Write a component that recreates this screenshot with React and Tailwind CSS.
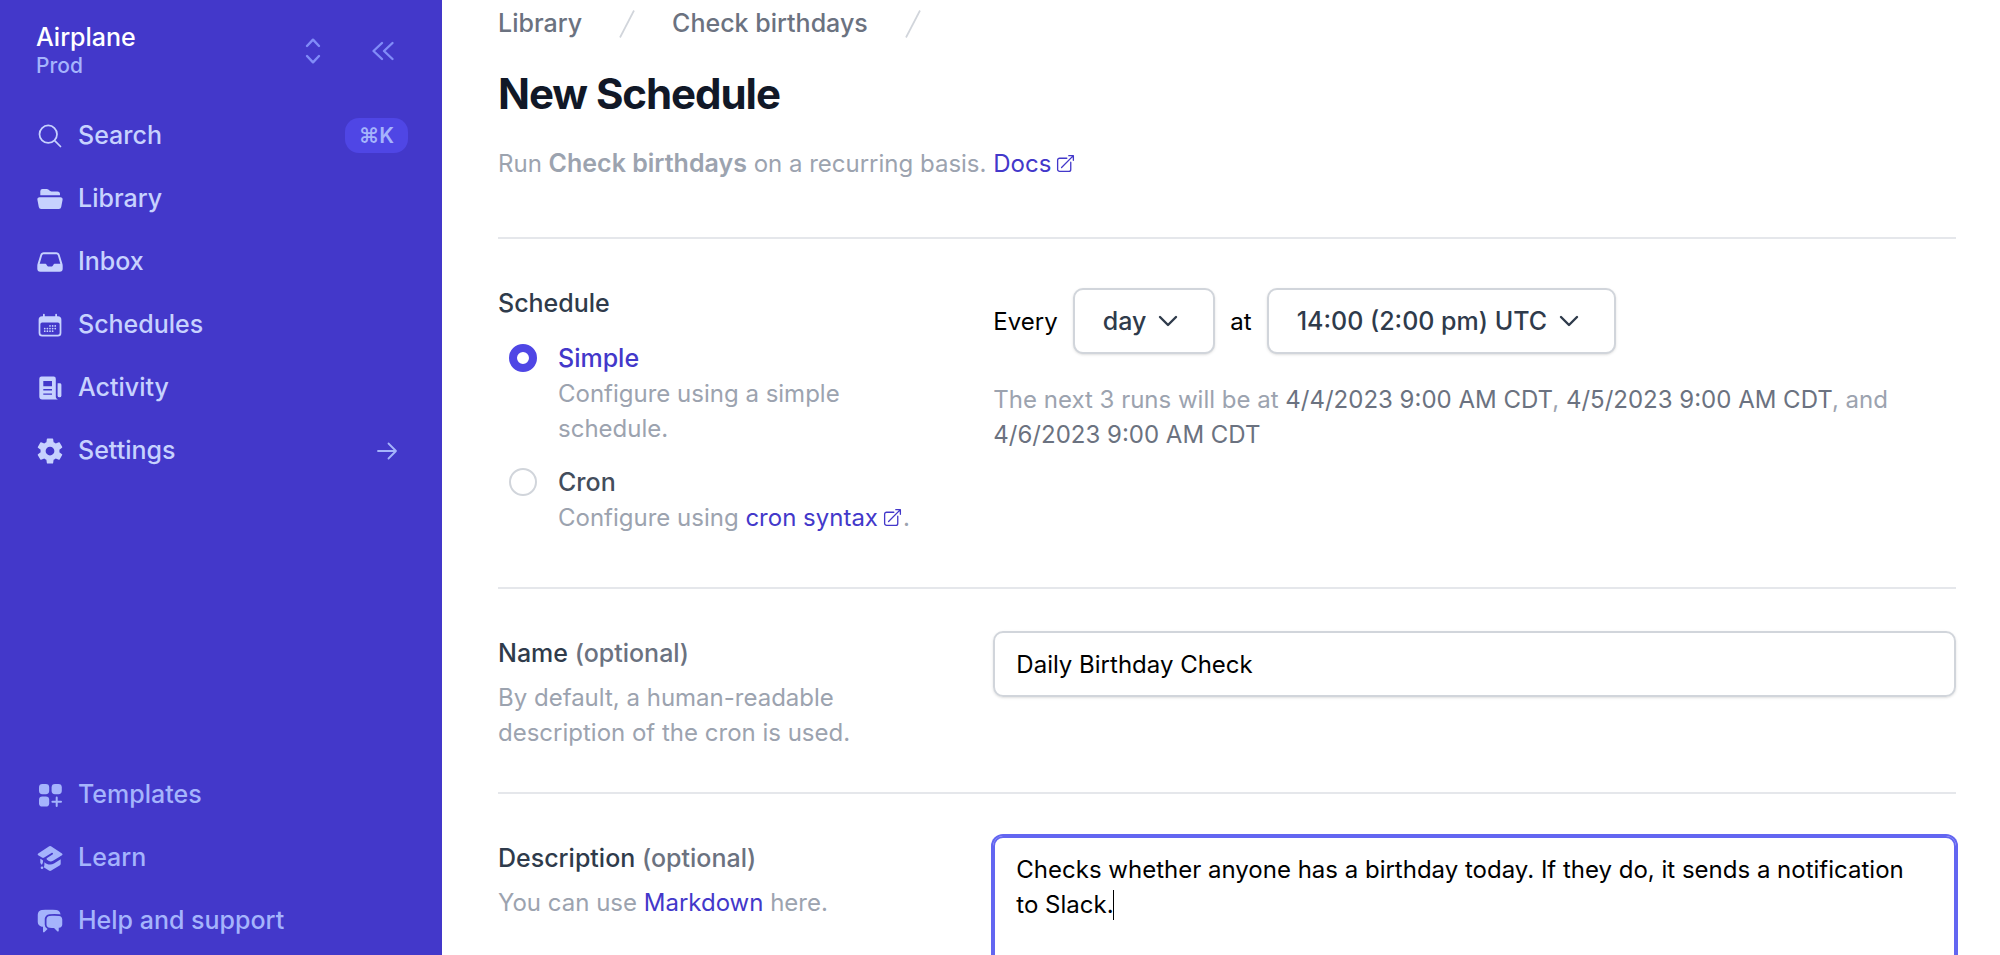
import { useState } from "react";
import {
  HiCalendarDays,
  HiChatBubbleLeftRight,
  HiOutlineArrowTopRightOnSquare,
  HiOutlineMagnifyingGlass,
} from "react-icons/hi2";
import { IoSettingsSharp } from "react-icons/io5";

function LibraryIcon(props) {
  return (
    <svg viewBox="0 0 28 28" fill="currentColor" {...props}>
      <path d="M4.300 10.300V6.200A2.200 2.200 0 0 1 6.500 4h4.300c.6 0 1.100.2 1.500.5l1.800 1.400c.4.3.9.500 1.400.5h6A2.500 2.500 0 0 1 24 8.900v1.400Z" />
      <path d="M3.600 12.200h20.800c1.500 0 2.500 1.200 2.200 2.600l-1.400 7.300A2.400 2.400 0 0 1 22.900 24H5.100a2.400 2.400 0 0 1-2.300-1.900l-1.400-7.300c-.3-1.400.7-2.600 2.200-2.600Z" />
    </svg>
  );
}

function InboxIcon(props) {
  return (
    <svg viewBox="0 0 28 28" fill="currentColor" {...props}>
      <path
        fillRule="evenodd"
        d="M7.800 4.200h12.400c1.700 0 3 1 3.500 2.700l2.600 8.600c.2.700.4 1.400.4 2.200v3.100a3 3 0 0 1-3 3H4.300a3 3 0 0 1-3-3v-3.100c0-.8.2-1.500.4-2.200l2.600-8.600c.5-1.700 1.800-2.700 3.500-2.700Zm.2 2c-.9 0-1.600.5-1.900 1.400L3.700 15.700h5.200c.9 0 1.500.5 1.800 1.300.3.900 1 1.500 2 1.500h2.600c1 0 1.700-.6 2-1.500.3-.8.9-1.300 1.800-1.300h5.200l-2.400-8.100c-.3-.9-1-1.400-1.900-1.400Z"
      />
    </svg>
  );
}

function ActivityIcon(props) {
  return (
    <svg viewBox="0 0 28 28" fill="currentColor" {...props}>
      <path
        fillRule="evenodd"
        d="M5.500 2.500h12A2.200 2.200 0 0 1 19.800 4.700V22.500c0 1.700 1 2.700 2.700 3H6.200a2.900 2.900 0 0 1-2.900-2.900V4.700A2.200 2.200 0 0 1 5.500 2.500ZM7.300 7v5.200h8.700V7ZM7.300 15v1.400h8.700V15ZM7.300 19.400v1.400h8.700v-1.400Z"
      />
      <path d="M21.600 9.200h2.200c.900 0 1.600.700 1.600 1.600v10.600a1.900 1.900 0 0 1-3.800 0Z" />
    </svg>
  );
}

function TemplatesIcon(props) {
  return (
    <svg viewBox="0 0 28 28" fill="currentColor" {...props}>
      <rect x="3" y="3" width="10.2" height="10.2" rx="3.4" />
      <rect x="15.6" y="3" width="10.2" height="10.2" rx="3.4" />
      <rect x="3" y="15.4" width="10.2" height="10.2" rx="3.4" />
      <path d="M20.700 16.500v8.600M16.400 20.800H25" fill="none" stroke="currentColor" strokeWidth="2" strokeLinecap="round" />
    </svg>
  );
}

function LearnIcon(props) {
  return (
    <svg viewBox="0 0 28 28" fill="currentColor" {...props}>
      <path d="M13.200 2.300a1.800 1.800 0 0 1 1.800 0L26 9.500c.7.500.7 1.200 0 1.700l-9 5.600c-1.700 1-3 .9-4.600-.1l-1.300-.9c-.8-.6-.8-1.200 0-1.700l5.400-3.500c1.200-.8.300-2.400-1-1.700l-7.300 4.600c-.8.500-1.500.5-2.300 0l-3.700-2.200c-.7-.5-.7-1.200 0-1.700Z" />
      <path d="M8.300 18.200c2.600 2.400 6.600 3.300 9.700 1.300l6.700-4.200v4.200c0 .900-.3 1.500-1.100 2l-8.300 5.100c-.9.500-1.600.5-2.400 0l-5.200-3.300c.8-1.600.8-3.300.6-5.100Z" />
      <path d="M4.300 14.800l2.600 1.500c.4 1.600-.1 3.100-1.100 4.500-.9-.7-1.500-1.500-1.500-2.500Z" />
      <circle cx="6" cy="23.8" r="1.3" />
    </svg>
  );
}

const NAV = [
  { label: "Search", icon: HiOutlineMagnifyingGlass, shortcut: "⌘K" },
  { label: "Library", icon: LibraryIcon },
  { label: "Inbox", icon: InboxIcon },
  { label: "Schedules", icon: HiCalendarDays },
  { label: "Activity", icon: ActivityIcon },
  { label: "Settings", icon: IoSettingsSharp, arrow: true },
];

const FOOTER_NAV = [
  { label: "Templates", icon: TemplatesIcon },
  { label: "Learn", icon: LearnIcon },
  { label: "Help and support", icon: HiChatBubbleLeftRight },
];

function ArrowIcon() {
  return (
    <svg
      className="mr-[9px] h-6 w-6 text-[#a5b4fc]"
      viewBox="0 0 24 24"
      fill="none"
      stroke="currentColor"
      strokeWidth="1.8"
      strokeLinecap="round"
      strokeLinejoin="round"
      aria-hidden="true"
    >
      <path d="M3 12h18M13.500 4.500 21 12l-7.500 7.500" />
    </svg>
  );
}

function NavItem({ item }) {
  const Icon = item.icon;
  return (
    <a href="#" className="flex h-[63px] items-center pr-[34px] pl-[36px] hover:bg-[#4f46e5]/40">
      <Icon className="mr-[14px] h-7 w-7" aria-hidden="true" />
      <span className="flex-1">{item.label}</span>
      {item.shortcut && (
        <kbd className="flex h-[35px] items-center rounded-[14px] bg-[#4f46e5] px-[14px] font-['Inter',sans-serif] text-[21px] font-semibold text-[#a5b4fc]">
          {item.shortcut}
        </kbd>
      )}
      {item.arrow && <ArrowIcon />}
    </a>
  );
}

function Sidebar() {
  return (
    <aside className="flex w-[442px] shrink-0 flex-col bg-[#4338ca] pt-[20px] pb-[3px] font-medium text-[#c7d2fe]">
      {/* Workspace */}
      <div className="flex items-center pr-[47px] pb-[22px] pl-[36px]">
        <div className="flex-1 pb-[6px]">
          <div className="text-[25px] leading-[35px] text-white">Airplane</div>
          <div className="text-[21px] leading-[21px] text-[#a5b4fc]">Prod</div>
        </div>
        <button type="button" aria-label="Switch workspace" className="mr-[49px] text-[#818cf8]">
          <svg
            className="h-7 w-[18px]"
            viewBox="0 0 18 28"
            fill="none"
            stroke="currentColor"
            strokeWidth="2.4"
            strokeLinecap="round"
            strokeLinejoin="round"
          >
            <path d="M3 9l6-6.300L15 9M3 19l6 6.300L15 19" />
          </svg>
        </button>
        <button type="button" aria-label="Collapse sidebar" className="text-[#818cf8]">
          <svg
            className="h-6 w-6"
            viewBox="0 0 24 24"
            fill="none"
            stroke="currentColor"
            strokeWidth="2.4"
            strokeLinecap="round"
            strokeLinejoin="round"
          >
            <path d="M11 4l-8.500 8 8.500 8M21.500 4 13 12l8.500 8" />
          </svg>
        </button>
      </div>

      <nav aria-label="Main" className="text-[25px]">
        {NAV.map((item) => (
          <NavItem key={item.label} item={item} />
        ))}
      </nav>

      <nav aria-label="Resources" className="mt-auto text-[25px] text-[#a5b4fc]">
        {FOOTER_NAV.map((item) => (
          <NavItem key={item.label} item={item} />
        ))}
      </nav>
    </aside>
  );
}

function Slash() {
  return (
    <svg className="h-7 w-4 text-[#d1d5db]" viewBox="0 0 16 28" stroke="currentColor" strokeWidth="1.7" aria-hidden="true">
      <path d="M1 27.500 15 .5" />
    </svg>
  );
}

function ExternalLink({ children }) {
  return (
    <a href="#" className="text-[#4338ca] hover:underline">
      {children}
      <HiOutlineArrowTopRightOnSquare className="ml-1 inline h-[21px] w-[21px] align-[-2px]" aria-hidden="true" />
    </a>
  );
}

function Select({ label, options }) {
  return (
    <div className="relative">
      <select
        aria-label={label}
        className="h-[66px] appearance-none rounded-[10px] border-2 border-[#d1d5db] bg-white pr-[67px] pl-[28px] text-[25px] font-medium text-[#2f3b4b] shadow-sm [field-sizing:content]"
      >
        {options.map((o) => (
          <option key={o}>{o}</option>
        ))}
      </select>
      <svg
        className="pointer-events-none absolute top-[22px] right-[36px] h-[22px] w-[22px] text-[#2f3b4b]"
        viewBox="0 0 22 22"
        fill="none"
        stroke="currentColor"
        strokeWidth="2.4"
        strokeLinecap="round"
        strokeLinejoin="round"
        aria-hidden="true"
      >
        <path d="M3 7l8 8 8-8" />
      </svg>
    </div>
  );
}

function RadioOption({ value, label, checked, onChange, children }) {
  return (
    <div className="flex px-[11px]">
      <input
        id={`mode-${value}`}
        type="radio"
        name="mode"
        value={value}
        checked={checked}
        onChange={() => onChange(value)}
        className="mt-[3px] mr-[21px] h-7 w-7 shrink-0 appearance-none rounded-full border-2 border-[#d1d5db] bg-white checked:border-8 checked:border-[#4f46e5]"
      />
      <div>
        <label
          htmlFor={`mode-${value}`}
          className={`block text-[25px] font-medium ${checked ? "text-[#4338ca]" : "text-[#434d5c]"}`}
        >
          {label}
        </label>
        <p className="text-[#9ca3af]">{children}</p>
      </div>
    </div>
  );
}

function Section({ left, children }) {
  return (
    <section className="grid grid-cols-3 gap-7 border-t-2 border-[#e5e7eb] py-[42px]">
      <div className="pt-[5px]">{left}</div>
      <div className="col-span-2">{children}</div>
    </section>
  );
}

function FieldLabel({ htmlFor, children }) {
  return (
    <label htmlFor={htmlFor} className="mb-[9px] block text-[25px] font-medium text-[#2f3b4b]">
      {children} <span className="text-[#6b7280]">(optional)</span>
    </label>
  );
}

export default function App() {
  const [mode, setMode] = useState("simple");

  return (
    <div className="flex h-screen overflow-hidden bg-white font-['Inter',sans-serif] text-[24px] leading-[35px] text-black">
      <Sidebar />

      <main className="flex-1 overflow-hidden pt-[6px] pr-[44px] pl-[56px]">
        {/* Breadcrumbs */}
        <nav aria-label="Breadcrumb" className="flex items-center gap-[37px] text-[25px] font-medium text-[#6b7280]">
          <a href="#">Library</a>
          <Slash />
          <a href="#">Check birthdays</a>
          <Slash />
        </nav>

        {/* Header */}
        <h1 className="mt-[25px] text-[42px] leading-[56px] font-bold tracking-tight text-[#111827]">New Schedule</h1>
        <p className="mt-6 mb-[56px] text-[#9ca3af]">
          Run <strong className="text-[25px] font-semibold">Check birthdays</strong> on a recurring basis.{" "}
          <ExternalLink>Docs</ExternalLink>
        </p>

        {/* Schedule */}
        <Section
          left={
            <fieldset className="pr-7 pb-[10px]">
              <legend className="mb-5 text-[25px] font-medium text-[#2f3b4b]">Schedule</legend>
              <div className="space-y-[19px]">
                <RadioOption value="simple" label="Simple" checked={mode === "simple"} onChange={setMode}>
                  Configure using a simple schedule.
                </RadioOption>
                <RadioOption value="cron" label="Cron" checked={mode === "cron"} onChange={setMode}>
                  Configure using <ExternalLink>cron syntax</ExternalLink>.
                </RadioOption>
              </div>
            </fieldset>
          }
        >
          <div className="flex items-center gap-[15px] pt-[7px]">
            <span>Every</span>
            <Select label="Interval" options={["day"]} />
            <span>at</span>
            <Select label="Time" options={["14:00 (2:00 pm) UTC"]} />
          </div>
          <p className="mt-7 text-[#9ca3af]">
            The next 3 runs will be at <span className="text-[#6b7280]">4/4/2023 9:00 AM CDT</span>,{" "}
            <span className="text-[#6b7280]">4/5/2023 9:00 AM CDT</span>, and{" "}
            <span className="whitespace-nowrap text-[#6b7280]">4/6/2023 9:00 AM CDT</span>
          </p>
        </Section>

        {/* Name */}
        <Section
          left={
            <>
              <FieldLabel htmlFor="name">Name</FieldLabel>
              <p className="text-[#9ca3af]">By default, a human-readable description of the cron is used.</p>
            </>
          }
        >
          <input
            id="name"
            type="text"
            defaultValue="Daily Birthday Check"
            className="block h-[66px] w-full rounded-[10px] border-2 border-[#d1d5db] px-[21px] shadow-sm outline-none"
          />
        </Section>

        {/* Description */}
        <Section
          left={
            <>
              <FieldLabel htmlFor="description">Description</FieldLabel>
              <p className="text-[#9ca3af]">
                You can use{" "}
                <a href="#" className="text-[#4338ca] hover:underline">
                  Markdown
                </a>{" "}
                here.
              </p>
            </>
          }
        >
          <div className="relative">
            <textarea
              id="description"
              rows={4}
              defaultValue="Checks whether anyone has a birthday today. If they do, it sends a notification to Slack."
              className="block w-full resize-none rounded-[10px] border-2 border-[#6366f1] py-[14px] pr-7 pl-[21px] caret-transparent ring-2 ring-[#6366f1] outline-none"
            />
            {/* Text cursor */}
            <span className="absolute top-[54px] left-[120px] h-[30px] w-px bg-black" aria-hidden="true" />
          </div>
        </Section>
      </main>
    </div>
  );
}
